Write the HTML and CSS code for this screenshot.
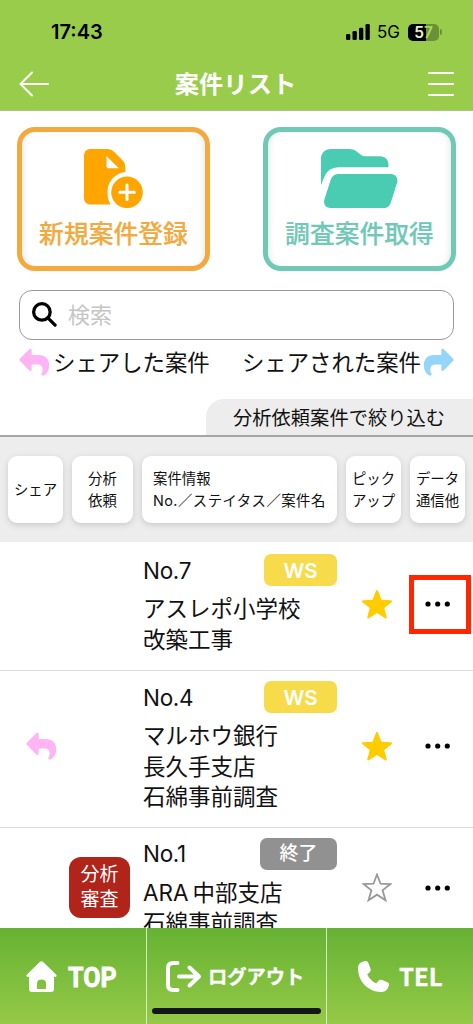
FILE: index.html
```html
<!DOCTYPE html>
<html lang="ja">
<head>
<meta charset="utf-8">
<title>案件リスト</title>
<link rel="stylesheet" href="styles.css">
</head>
<body>
<svg class="defs" width="0" height="0" aria-hidden="true">
  <symbol id="reply" viewBox="0 0 31 28"><path d="M1 10.400 10.300 1.300C11.200.4 12.700 1 12.700 2.300V7h7.300c6.200 0 10.200 4 10.200 10.500 0 4.500-2 7.700-4.900 9.700-.8.5-1.800.5-2.500.1-.6-.4-.7-1-.3-1.600 2.200-3.600 1.500-9.200-3.500-9.200h-6.300v5c0 1.300-1.500 1.900-2.400 1L1 13C.2 12.200.2 11.200 1 10.400z"/></symbol>
  <symbol id="star" viewBox="0 0 30 29"><path d="M15 0c.6 0 .9.400 1.100.9L19.500 9.800l9.300.5c1.300.1 1.600 1.100.7 1.900L22.300 18l2.400 9c.3 1.200-.5 1.900-1.600 1.200L15 23.100l-8.100 5.100c-1.100.7-1.900 0-1.600-1.200l2.400-9L.5 12.200c-.9-.8-.6-1.800.7-1.900l9.300-.5L13.900.9C14.100.4 14.400 0 15 0z"/></symbol>
  <symbol id="dots" viewBox="0 0 26 6"><circle cx="3" cy="3" r="2.600"/><circle cx="12.700" cy="3" r="2.600"/><circle cx="22.300" cy="3" r="2.600"/></symbol>
</svg>
<div class="app">
  <header class="top">
    <div class="status">
      <span class="time">17:43</span>
      <svg class="signal" viewBox="0 0 25 16"><rect x="0" y="10" width="4.300" height="6" rx="1.300"/><rect x="6.500" y="7" width="4.300" height="9" rx="1.300"/><rect x="13" y="3.800" width="4.300" height="12.200" rx="1.300"/><rect x="19.500" y="0" width="4.300" height="16" rx="1.300"/></svg>
      <span class="net">5G</span>
      <span class="battery"><b>5</b><i>7</i></span><span class="cap"></span>
    </div>
    <div class="nav">
      <svg class="back" viewBox="0 0 30 26"><path d="M29 13H2M13 1.500 1.500 13 13 24.500"/></svg>
      <h1>案件リスト</h1>
      <svg class="menu" viewBox="0 0 26 26"><path d="M1 2h24M1 13h24M1 24h24"/></svg>
    </div>
  </header>

  <section class="actions">
    <button class="action new">
      <svg viewBox="0 0 59 59"><path d="M7 0h16c3 0 5 .8 7 2.800l8.500 8.500c2 2 2.800 4 2.800 7V23C31 24.500 23.500 32 23.500 43c0 4.500.8 8.500 3 12.500H7c-4.500 0-7-2.500-7-7V7c0-4.500 2.500-7 7-7z"/><path class="hole" d="M22.500 7v10c0 1.500.8 2.300 2.300 2.300h10z"/><circle cx="43" cy="43.300" r="15.800"/><path class="plus" d="M43 36v14.600M35.700 43.300h14.600"/></svg>
      <span>新規案件登録</span>
    </button>
    <button class="action fetch">
      <svg viewBox="0 0 77 59"><path d="M0 36V10C0 4 4 0 10 0h18c4 0 6 1 8.500 3.200l3.300 2.500c1.700 1.300 3 1.500 5 1.500H59c5 0 8.500 3.500 8.500 8.500v2.500H18C10.500 18.200 6 22 3.800 27z"/><path d="M18 25h51.500c5 0 8 4 6.500 9l-6 19c-1.300 4-3.500 6-7.500 6H9.500C4.500 59 2 55 3.500 50l6-18.500C11 27 13.500 25 18 25z"/></svg>
      <span>調査案件取得</span>
    </button>
  </section>

  <div class="search">
    <svg viewBox="0 0 26 26"><circle cx="10.300" cy="10.300" r="8.600"/><path d="m16.500 16.500 7.500 7.500"/></svg>
    <span>検索</span>
  </div>

  <div class="legend">
    <span class="given"><svg><use href="#reply"/></svg>シェアした案件</span>
    <span class="received">シェアされた案件<svg><use href="#reply"/></svg></span>
  </div>
  <div class="filter"><span>分析依頼案件で絞り込む</span></div>

  <div class="columns">
    <div class="col">シェア</div>
    <div class="col">分析<br>依頼</div>
    <div class="col info"><div>案件情報<br><span class="wide">No.／ステイタス／案件名</span></div></div>
    <div class="col">ピック<br>アップ</div>
    <div class="col">データ<br>通信他</div>
  </div>

  <main class="list">
    <article class="row">
      <div></div><div></div>
      <div class="case"><div class="head"><span>No.7</span><span class="badge">WS</span></div><p>アスレポ小学校<br>改築工事</p></div>
      <svg class="star"><use href="#star"/></svg>
      <div class="more marked"><svg><use href="#dots"/></svg></div>
    </article>
    <article class="row">
      <svg class="share"><use href="#reply"/></svg><div></div>
      <div class="case"><div class="head"><span>No.4</span><span class="badge">WS</span></div><p>マルホウ銀行<br>長久手支店<br>石綿事前調査</p></div>
      <svg class="star"><use href="#star"/></svg>
      <div class="more"><svg><use href="#dots"/></svg></div>
    </article>
    <article class="row">
      <div></div><div class="review">分析<br>審査</div>
      <div class="case"><div class="head"><span>No.1</span><span class="badge done">終了</span></div><p><span class="latin">ARA</span>中部支店<br>石綿事前調査</p></div>
      <svg class="star empty" viewBox="0 0 30 29"><path d="M15 1.500 18.500 10.700 28.500 11 20.600 17.300 23.500 27.300 15 21.700 6.500 27.300 9.400 17.300 1.500 11l10-.3z"/></svg>
      <div class="more"><svg><use href="#dots"/></svg></div>
    </article>
  </main>

  <footer class="tabs">
    <div class="tab"><svg class="home" viewBox="0 0 31 31"><path fill-rule="evenodd" d="M14 .8c1-.9 2-.9 3 0l13 12.700c1.200 1.200.7 2.500-.8 2.500H28v12c0 2-1 3-3 3H6c-2 0-3-1-3-3V16H1.800C.3 16-.2 14.700 1 13.500zM11 28h9v-5.500c0-2.500-1.500-4-4.500-4s-4.500 1.500-4.500 4z"/></svg><span class="top-label">TOP</span></div>
    <div class="tab"><svg class="exit" viewBox="0 0 36 31"><path d="M11.500 2H7C3.500 2 2 3.500 2 7v17c0 3.500 1.500 5 5 5h4.500M13 15.500h20M23.500 6.500l9.500 9-9.500 9"/></svg><span class="logout">ログアウト</span></div>
    <div class="tab"><svg class="phone" viewBox="0 0 31 31"><path d="M2.500 1.700C4.500.5 6.500 0 8 0c1.500.2 2 1 2.500 2.200l2 5.500c.6 1.700.2 2.800-1 3.800L9.200 13.300c2 4.200 4.500 7 9 9.200l2.200-2.700c1-1.200 2.200-1.500 3.800-.8l5.200 2.300c1.500.6 2 1.700 1.500 3.200C29.500 29 27 31 23 31 10 31 0 20 0 7.500 0 5 .5 3 2.500 1.700z"/></svg><span class="tel">TEL</span></div>
    <div class="indicator"></div>
  </footer>
</div>
</body>
</html>
```

FILE: styles.css
```css
* { box-sizing: border-box; }
body { margin: 0; background: #fff; color: #111; font-family: Inter, "Noto Sans CJK JP", sans-serif; }
.defs { display: block; }
.app { width: 473px; height: 1024px; display: flex; flex-direction: column; overflow: hidden; }
h1, p { margin: 0; }

.top { height: 111px; flex: none; background: #99cc4a; border-bottom: 1px solid #a9c87a; }
.status { display: flex; align-items: center; height: 56px; padding: 8px 31px 0 51px; color: #000; }
.time { flex: 1; font-size: 20px; font-weight: 600; }
.signal { width: 25px; height: 16px; margin-right: 6px; }
.net { font-size: 17px; width: 31px; }
.battery { display: flex; justify-content: center; align-items: center; width: 31px; height: 17px; border-radius: 5px; background: linear-gradient(90deg, #000 57%, #6a9137 57%); font-size: 15.5px; line-height: 17px; font-weight: 600; }
.battery b { color: #e4f3cc; font-weight: 600; }
.battery i { font-style: normal; color: #a3d954; }
.cap { width: 2px; height: 6px; margin-left: 1px; border-radius: 0 2px 2px 0; background: #6a9137; }
.nav { display: flex; align-items: center; justify-content: space-between; height: 54px; padding: 2px 19px 0; color: #fff; }
.nav svg { fill: none; stroke: #fff; stroke-width: 2; stroke-linecap: round; }
.back { width: 30px; height: 26px; }
.menu { width: 26px; height: 26px; }
h1 { margin-right: 6px; font-size: 24.3px; line-height: 36px; font-weight: 600; }

.actions { display: flex; justify-content: space-between; padding: 16px 17px 0; }
.action { display: flex; flex-direction: column; align-items: center; width: 193px; height: 144px; padding: 17px 0 0; border: 5px solid; border-radius: 18px; background: #fff; box-shadow: inset 6px 0 6px -4px #e8eceb, inset -6px 0 6px -4px #e8eceb; font: 500 24.8px/36px "Noto Sans CJK JP", sans-serif; white-space: nowrap; }
.action svg { height: 59px; }
.action span { margin-top: 6px; -webkit-text-stroke: .2px currentColor; }
.new { color: #f3a93d; border-color: #f3a93d; }
.new svg { width: 59px; fill: #ffa500; }
.new .hole { fill: #fff; }
.new .plus { fill: none; stroke: #fff; stroke-width: 3; stroke-linecap: round; }
.fetch { color: #70c9b6; border-color: #70c9b6; }
.fetch svg { width: 77px; fill: #49ccb2; }

.search { display: flex; align-items: center; gap: 11px; flex: none; height: 50px; margin: 19px 19px 0; padding: 0 12px; border: 1px solid #999; border-radius: 13px; color: #c5c5c5; font-size: 22px; }
.search span { margin-top: -4px; }
.search svg { width: 25px; height: 25px; margin-top: -1px; fill: none; stroke: #000; stroke-width: 3.4; stroke-linecap: round; }

.legend { display: flex; justify-content: space-between; height: 59px; flex: none; padding: 6px 19px 0; font-size: 22.4px; line-height: 34px; }
.legend span { display: flex; }
.legend svg { width: 31px; height: 28px; margin-top: 2px; }
.given svg { fill: #ffb5f4; margin-right: 3px; }
.received svg { fill: #94d6fa; transform: scaleX(-1); margin-left: 2px; }
.filter { display: flex; justify-content: flex-end; height: 36px; flex: none; }
.filter span { width: 267px; padding-left: 27px; border-radius: 18px 0 0 0; background: #ededed; font-size: 19.3px; line-height: 38px; white-space: nowrap; }

.columns { display: grid; grid-template-columns: 55px 61px 195px 55px 55px; gap: 9px; flex: none; height: 107px; padding: 19px 8px; border-top: 2px solid #a6a6a6; background: #ededed; }
.col { display: flex; align-items: center; justify-content: center; height: 67px; border-radius: 9px; background: #fff; box-shadow: 0 2px 6px #c9c9c9; font-size: 14.4px; line-height: 22px; white-space: nowrap; }
.info { justify-content: flex-start; padding-left: 11px; }
.wide { letter-spacing: .45px; }

.list { flex: 1; min-height: 0; overflow: hidden; padding-top: 2px; }
.row { display: grid; grid-template-columns: 55px 61px 195px 55px 55px; column-gap: 9px; padding: 9px 8px 14px; align-items: center; justify-items: center; border-bottom: 1px solid #dcdcdc; }
.row:first-child { padding-bottom: 15px; }
.row:nth-child(2) { padding-bottom: 14px; }
.case { width: 195px; justify-self: start; }
.head { display: flex; align-items: center; justify-content: space-between; height: 34px; font-size: 22.5px; letter-spacing: -.3px; padding-left: 1px; }
.badge { width: 73px; height: 32px; border-radius: 7px; background: #f8db4a; color: #fff; text-align: center; font-size: 20.5px; line-height: 33px; font-weight: 600; letter-spacing: 0; }
.done { width: 77px; background: #919191; font-size: 19px; line-height: 31px; font-weight: 500; }
.case p { margin-top: 7px; padding-left: 1px; font-size: 22.5px; line-height: 30.5px; white-space: nowrap; }
.latin { margin-right: 4px; }
.star { width: 30px; height: 29px; margin-left: 6px; fill: #ffcc00; }
.empty { fill: none; stroke: #999; stroke-width: 1.8; }
.share { width: 31px; height: 28px; margin-left: 11px; fill: #ffb5f4; }
.more { display: flex; align-items: center; justify-content: center; width: 62px; height: 59px; justify-self: center; }
.more svg { width: 26px; height: 6px; }
.marked { border: 5px solid #ff2600; margin-left: 4px; }
.marked svg { margin-right: 4px; flex: none; }
.review { width: 61px; height: 61px; margin-left: -6px; padding-top: 6px; border-radius: 12px; background: #b02419; color: #fff; text-align: center; font-size: 19px; line-height: 24.5px; }

.tabs { position: relative; display: grid; grid-template-columns: 147px 180px 146px; height: 96px; flex: none; background: linear-gradient(#66b233, #95c947); color: #fff; font-family: "Noto Sans CJK JP", sans-serif; font-weight: 700; }
.tab { display: flex; align-items: center; height: 96px; white-space: nowrap; }
.tab:nth-child(1) { padding-left: 26px; border-right: 1px solid #d6ebc2; }
.tab:nth-child(2) { padding-left: 19px; border-right: 1px solid #d6ebc2; }
.tab:nth-child(3) { padding-left: 31px; }
.tab svg { height: 31px; flex: none; fill: #fff; }
.home, .phone { width: 31px; }
.tab .exit { width: 36px; fill: none; stroke: #fff; stroke-width: 4; stroke-linecap: round; stroke-linejoin: round; }
.top-label { margin: 3px 0 0 11px; font: 700 28.5px/34px Roboto, sans-serif; transform: scaleX(.88); transform-origin: left; -webkit-text-stroke: .8px #fff; }
.logout { margin-left: 6px; font-size: 19.3px; -webkit-text-stroke: .3px #fff; }
.tel { margin: -2px 0 0 10px; font-size: 24px; -webkit-text-stroke: .3px #fff; }
.indicator { position: absolute; left: 152px; top: 80px; width: 169px; height: 6px; border-radius: 3px; background: #161616; }
```
